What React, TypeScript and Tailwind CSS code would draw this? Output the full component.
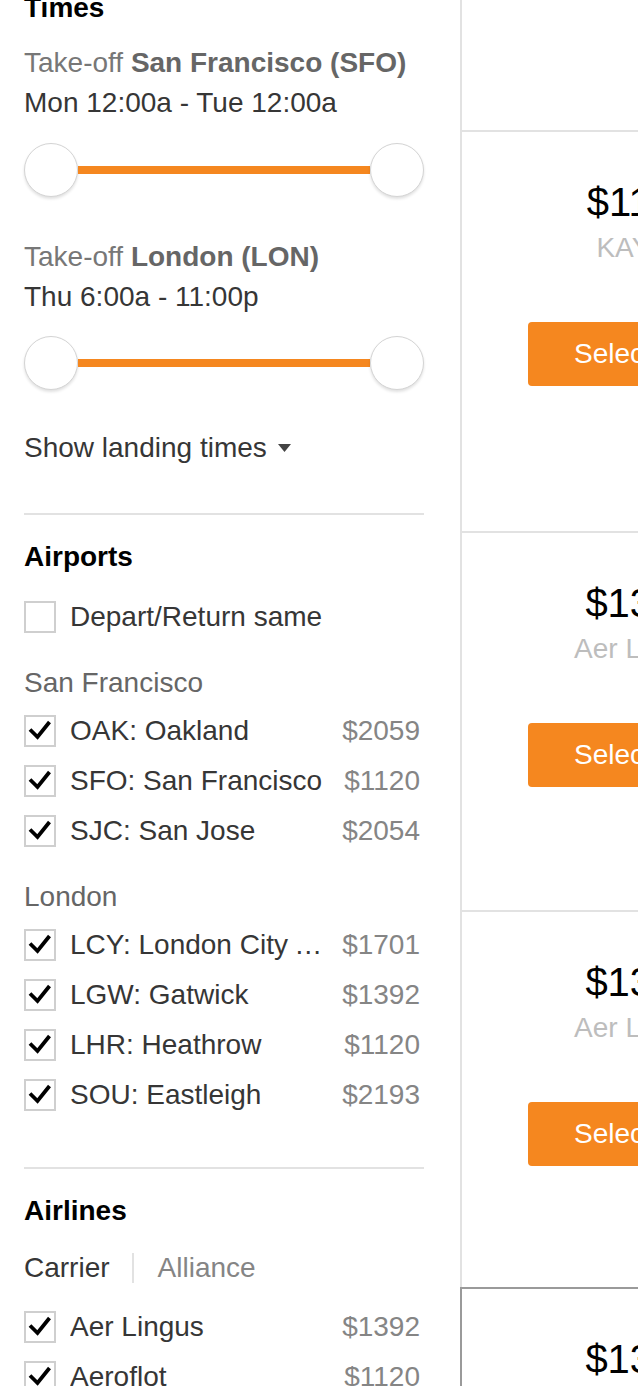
import type { ReactNode } from "react";

type Row = { label: string; price: string };

const sfAirports: Row[] = [
  { label: "OAK: Oakland", price: "$2059" },
  { label: "SFO: San Francisco", price: "$1120" },
  { label: "SJC: San Jose", price: "$2054" },
];

const londonAirports: Row[] = [
  { label: "LCY: London City Airport", price: "$1701" },
  { label: "LGW: Gatwick", price: "$1392" },
  { label: "LHR: Heathrow", price: "$1120" },
  { label: "SOU: Eastleigh", price: "$2193" },
];

const airlines: Row[] = [
  { label: "Aer Lingus", price: "$1392" },
  { label: "Aeroflot", price: "$1120" },
];

type Result = { price: string; source: string; height: string };

const results: Result[] = [
  { price: "$1120", source: "KAYAK", height: "h-[401px]" },
  { price: "$1392", source: "Aer Lingus", height: "h-[379px]" },
  { price: "$1392", source: "Aer Lingus", height: "h-[377px]" },
];

function Checkbox({ checked }: { checked: boolean }) {
  return (
    <span className="flex h-8 w-8 shrink-0 items-center justify-center border-2 border-[#cfcfcf] bg-white">
      {checked ? (
        <svg width="28" height="28" viewBox="0 0 28 28" fill="none">
          <path
            d="M4 12.5 L11.5 20 L23.5 5"
            stroke="#000"
            strokeWidth="3.8"
            strokeLinejoin="miter"
          />
        </svg>
      ) : null}
    </span>
  );
}

function CheckRow({ label, price }: Row) {
  return (
    <div className="flex h-10 items-center">
      <Checkbox checked />
      <span className="ml-[14px] min-w-0 flex-1 truncate text-[#363636]">
        {label}
      </span>
      <span className="ml-[14px] shrink-0 pr-1 text-[#858585]">{price}</span>
    </div>
  );
}

function RangeSlider() {
  return (
    <div className="flex h-[54px] items-center">
      <span className="h-[54px] w-[54px] shrink-0 rounded-full border-[1.5px] border-[#d4d4d4] bg-white shadow-[0_2px_3px_rgba(0,0,0,0.12)]" />
      <span className="h-2 flex-1 bg-[#f5871f]" />
      <span className="h-[54px] w-[54px] shrink-0 rounded-full border-[1.5px] border-[#d4d4d4] bg-white shadow-[0_2px_3px_rgba(0,0,0,0.12)]" />
    </div>
  );
}

function Heading({ children, className }: { children: ReactNode; className: string }) {
  return <h2 className={`font-bold text-black ${className}`}>{children}</h2>;
}

function Divider({ className }: { className: string }) {
  return <div className={`h-[2px] bg-[#e2e2e2] ${className}`} />;
}

function Sidebar() {
  return (
    <aside className="-mt-3 w-[460px] shrink-0 pl-6 pr-9">
      <Heading className="">Times</Heading>

      <div className="mt-[15px]">
        <p className="text-[#777]">
          Take-off <span className="font-bold text-[#666]">San Francisco (SFO)</span>
        </p>
        <p className="text-[#363636]">Mon 12:00a - Tue 12:00a</p>
      </div>
      <div className="mt-5">
        <RangeSlider />
      </div>

      <div className="mt-10">
        <p className="text-[#777]">
          Take-off <span className="font-bold text-[#666]">London (LON)</span>
        </p>
        <p className="text-[#363636]">Thu 6:00a - 11:00p</p>
      </div>
      <div className="mt-[19px]">
        <RangeSlider />
      </div>

      <button className="mt-[38px] flex h-10 items-center text-[#363636]">
        Show landing times
        <svg className="ml-[11px]" width="13" height="8" viewBox="0 0 13 8">
          <path d="M0 0 H13 L6.5 8 Z" fill="#444" />
        </svg>
      </button>

      <Divider className="mt-[45px]" />

      <Heading className="mt-[22px]">Airports</Heading>
      <div className="mt-5 flex h-10 items-center">
        <Checkbox checked={false} />
        <span className="ml-[14px] text-[#363636]">Depart/Return same</span>
      </div>

      <p className="mt-[26px] text-[#666]">San Francisco</p>
      <div className="mt-2 flex flex-col gap-[10px]">
        {sfAirports.map((row) => (
          <CheckRow key={row.label} {...row} />
        ))}
      </div>

      <p className="mt-[26px] text-[#666]">London</p>
      <div className="mt-2 flex flex-col gap-[10px]">
        {londonAirports.map((row) => (
          <CheckRow key={row.label} {...row} />
        ))}
      </div>

      <Divider className="mt-[52px]" />

      <Heading className="mt-[22px]">Airlines</Heading>
      <div className="mt-[17px] flex h-10 items-center">
        <span className="text-[#363636]">Carrier</span>
        <span className="ml-[22px] h-[30px] w-[2px] bg-[#e2e2e2]" />
        <span className="ml-6 text-[#858585]">Alliance</span>
      </div>
      <div className="mt-[19px] flex flex-col gap-[10px]">
        {airlines.map((row) => (
          <CheckRow key={row.label} {...row} />
        ))}
      </div>
    </aside>
  );
}

function ResultCard({ price, source }: { price: string; source: string }) {
  return (
    <div className="flex w-[226px] shrink-0 flex-col pt-[46px]">
      <p className="text-center text-[40px] leading-[48px] text-black">{price}</p>
      <p className="mt-1 text-center leading-9 text-[#bdbdbd]">{source}</p>
      <button className="mt-14 h-16 w-[170px] rounded-[4px] bg-[#f5871f] text-white">
        Select
      </button>
    </div>
  );
}

export default function App() {
  return (
    <div className="flex h-screen w-full overflow-hidden bg-white font-['Liberation_Sans',Arial,sans-serif] text-[28px] leading-10">
      <Sidebar />
      <main className="flex min-w-0 flex-1 flex-col overflow-hidden">
        <div className="h-[130px] shrink-0 border-l-2 border-[#e2e2e2]" />
        {results.map((r, i) => (
          <section
            key={i}
            className={`flex shrink-0 border-l-2 border-t-2 border-[#e2e2e2] pl-[66px] ${r.height}`}
          >
            <ResultCard price={r.price} source={r.source} />
          </section>
        ))}
        <section className="flex flex-1 border-l-2 border-t-2 border-[#9a9a9a] pl-[66px]">
          <div className="flex w-[226px] shrink-0 flex-col pt-[46px]">
            <p className="text-center text-[40px] leading-[48px] text-black">$1392</p>
          </div>
        </section>
      </main>
    </div>
  );
}
